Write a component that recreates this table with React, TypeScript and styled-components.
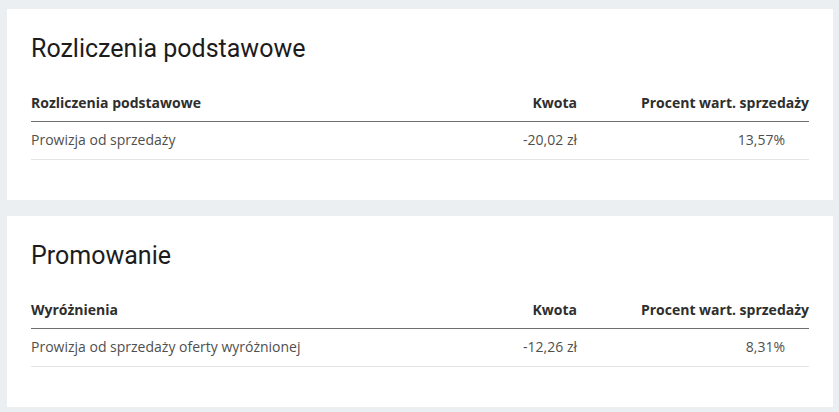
import { createGlobalStyle, styled } from "styled-components"

const GlobalStyle = createGlobalStyle`
    html, body {
        margin: 0;
        padding: 0;
        background: #eceff1;
    }
    * {
        box-sizing: border-box;
    }
`

const Page = styled.div`
    display: flex;
    flex-direction: column;
    gap: 16px;
    padding: 9px 6px 6px 7px;
    width: 839px;
`

const Card = styled.section`
    background: #ffffff;
    padding: 24px 24px 40px 24px;
`

const Title = styled.h2`
    margin: 0 0 20px 0;
    font-family: Roboto, "Liberation Sans", sans-serif;
    font-weight: 400;
    font-size: 25px;
    line-height: 32px;
    color: #1c1c1c;
`

const Row = styled.div<{ $head?: boolean }>`
    display: grid;
    grid-template-columns: 1fr 150px 232px;
    border-bottom: 1px solid ${(p) => (p.$head ? "#6f6f6f" : "#e2e4e6")};
    font-family: "Open Sans", "Liberation Sans", sans-serif;
    font-size: 14px;
    line-height: 20px;
    font-weight: ${(p) => (p.$head ? 700 : 400)};
    color: ${(p) => (p.$head ? "#2e2e2e" : "#4f4f4f")};
`

const Cell = styled.div<{ $align?: "left" | "right"; $pad?: number; $head?: boolean }>`
    text-align: ${(p) => p.$align ?? "left"};
    padding: ${(p) => (p.$head ? "8px" : "8px 0 9px 0")};
    padding-left: 0;
    padding-right: ${(p) => p.$pad ?? 0}px;
    white-space: nowrap;
`

type Section = {
    title: string
    group: string
    label: string
    amount: string
    percent: string
}

const sections: Section[] = [
    {
        title: "Rozliczenia podstawowe",
        group: "Rozliczenia podstawowe",
        label: "Prowizja od sprzedaży",
        amount: "-20,02 zł",
        percent: "13,57%",
    },
    {
        title: "Promowanie",
        group: "Wyróżnienia",
        label: "Prowizja od sprzedaży oferty wyróżnionej",
        amount: "-12,26 zł",
        percent: "8,31%",
    },
]

export default function App() {
    return (
        <>
            <GlobalStyle />
            <Page>
                {sections.map((s) => (
                    <Card key={s.title}>
                        <Title>{s.title}</Title>
                        <Row $head>
                            <Cell $head>{s.group}</Cell>
                            <Cell $head $align="right">Kwota</Cell>
                            <Cell $head $align="right">Procent wart. sprzedaży</Cell>
                        </Row>
                        <Row>
                            <Cell>{s.label}</Cell>
                            <Cell $align="right">{s.amount}</Cell>
                            <Cell $align="right" $pad={24}>{s.percent}</Cell>
                        </Row>
                    </Card>
                ))}
            </Page>
        </>
    )
}
